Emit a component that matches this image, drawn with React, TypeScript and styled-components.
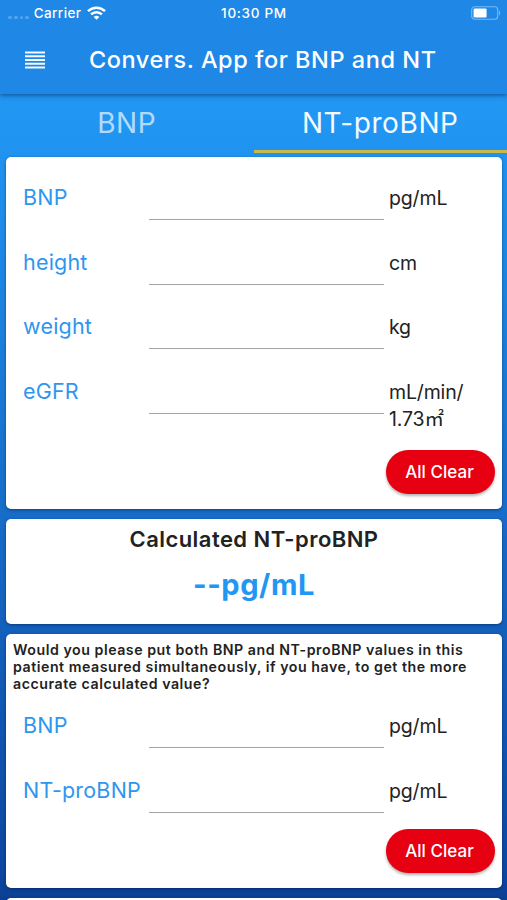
import React from "react";
import styled, { createGlobalStyle } from "styled-components";

const GlobalStyle = createGlobalStyle`
  *, *::before, *::after { box-sizing: border-box; }
  body {
    margin: 0;
    overflow: hidden;
    font-family: Inter, "Noto Sans CJK JP", sans-serif;
    color: #222;
  }
`;

const Screen = styled.div`
  width: 507px;
  height: 900px;
  overflow: hidden;
  display: flex;
  flex-direction: column;
  background: linear-gradient(180deg, #2196f3 0, #2196f3 120px, #0d47a1 870px, #0b3f94 900px);
`;

const Header = styled.header`
  flex: none;
  height: 94px;
  background: #1f87e5;
  color: #fff;
  box-shadow: 0 1px 5px rgba(0, 25, 60, 0.6);
  z-index: 1;
`;

const StatusBar = styled.div`
  height: 26px;
  padding: 0 6px 0 8px;
  display: grid;
  grid-template-columns: 1fr auto 1fr;
  align-items: center;
  font-size: 13.5px;
  font-weight: 500;
  letter-spacing: 0.4px;
  line-height: 26px;
`;

const Carrier = styled.div`
  display: flex;
  align-items: center;
`;

const Clock = styled.span`
  letter-spacing: 0.7px;
  margin-right: 1px;
`;

const Dots = styled.div`
  display: flex;
  gap: 2px;
  padding-top: 9px;
  margin-right: 4.5px;
`;

const Dot = styled.i`
  width: 3.8px;
  height: 3.8px;
  border-radius: 50%;
  background: #55a5ee;
`;

const WifiIcon = styled.svg`
  margin-left: 6px;
`;

const BatteryIcon = styled.svg`
  justify-self: end;
`;

const AppBar = styled.div`
  height: 68px;
  display: flex;
  align-items: center;
  padding-left: 25px;
`;

const MenuIcon = styled.svg`
  flex: none;
  margin-right: 44px;
`;

const Title = styled.h1`
  margin: 0;
  font-size: 23.5px;
  font-weight: 500;
  line-height: 30px;
  letter-spacing: 0.55px;
  white-space: nowrap;
`;

const Tabs = styled.nav`
  flex: none;
  height: 59px;
  display: grid;
  grid-template-columns: 1fr 1fr;
`;

const Tab = styled.div<{ $active?: boolean }>`
  text-align: center;
  padding-top: 11px;
  font-size: 28px;
  line-height: 36px;
  letter-spacing: 0.6px;
  color: ${(p) => (p.$active ? "#f5faff" : "rgba(255,255,255,0.68)")};
  border-bottom: 3px solid ${(p) => (p.$active ? "#c9b94a" : "transparent")};
`;

const Cards = styled.main`
  flex: none;
  padding: 4px 5px 0 6px;
  display: flex;
  flex-direction: column;
  gap: 9.5px;
`;

const Card = styled.section<{ $height: number }>`
  height: ${(p) => p.$height}px;
  border-radius: 5px;
  background: #fff;
  box-shadow: 0 1px 3px rgba(0, 20, 60, 0.5);
  display: flex;
  flex-direction: column;
`;

const Fields = styled.div<{ $top: number }>`
  padding: ${(p) => p.$top}px 0 0 17px;
`;

const Row = styled.label`
  height: 64.7px;
  display: grid;
  grid-template-columns: 126px 235px 1fr;

  &:last-child {
    height: auto;
  }
`;

const Label = styled.span`
  margin-top: -1px;
  font-size: 21.5px;
  line-height: 28px;
  letter-spacing: 0.2px;
  color: #2f96ee;
  white-space: nowrap;
`;

const Input = styled.input`
  height: 36px;
  padding: 0;
  border: 0;
  border-bottom: 1px solid #a5a5a5;
  background: transparent;
  font: inherit;
  outline: none;
`;

const Unit = styled.span`
  padding: 1px 0 0 5px;
  font-size: 19.5px;
  line-height: 27px;
  letter-spacing: -0.15px;
  white-space: pre-line;
`;

const ClearButton = styled.button`
  align-self: flex-end;
  margin: auto 7px 15px 0;
  padding: 0 2px 0 0;
  flex: none;
  width: 109px;
  height: 44px;
  border: 0;
  border-radius: 22px;
  background: #e60012;
  color: #fff;
  font: 500 17px Inter, sans-serif;
  letter-spacing: 0.05px;
  box-shadow: 0 2px 3px rgba(0, 0, 0, 0.3);
`;

const ResultTitle = styled.h2`
  margin: 6px 0 0;
  text-align: center;
  font-size: 22px;
  font-weight: 600;
  line-height: 28px;
  letter-spacing: 0.45px;
`;

const ResultValue = styled.p`
  margin: 14px 0 0;
  text-align: center;
  font-size: 29px;
  font-weight: 700;
  line-height: 36px;
  letter-spacing: 0.6px;
  color: #2196f3;
`;

const Question = styled.p`
  margin: 0;
  padding: 7px 0 0 7px;
  font-size: 14.2px;
  font-weight: 600;
  line-height: 17.2px;
  letter-spacing: 0.53px;
  white-space: pre-line;
`;

type FieldData = { label: string; unit: string };

const PATIENT_FIELDS: FieldData[] = [
  { label: "BNP", unit: "pg/mL" },
  { label: "height", unit: "cm" },
  { label: "weight", unit: "kg" },
  { label: "eGFR", unit: "mL/min/\n1.73㎡" },
];

const MEASURED_FIELDS: FieldData[] = [
  { label: "BNP", unit: "pg/mL" },
  { label: "NT-proBNP", unit: "pg/mL" },
];

function FieldRows({ fields, top }: { fields: FieldData[]; top: number }) {
  return (
    <Fields $top={top}>
      {fields.map((f) => (
        <Row key={f.label}>
          <Label>{f.label}</Label>
          <Input />
          <Unit>{f.unit}</Unit>
        </Row>
      ))}
    </Fields>
  );
}

export default function App() {
  return (
    <>
      <GlobalStyle />
      <Screen>
        <Header>
          <StatusBar>
            <Carrier>
              <Dots><Dot /><Dot /><Dot /><Dot /></Dots>
              Carrier
              <WifiIcon width="19" height="14" viewBox="0 0 19 14" fill="none" stroke="#fff" strokeWidth="2.5">
                <path d="M1 5.2C5.8.6 13.2.6 18 5.2M4.1 8.4c3-2.9 7.8-2.9 10.8 0" />
                <path d="M9.5 13.8 6.6 10.9c1.7-1.5 4.1-1.5 5.8 0Z" fill="#fff" stroke="none" />
              </WifiIcon>
            </Carrier>
            <Clock>10:30 PM</Clock>
            <BatteryIcon width="30" height="14" viewBox="0 0 30 14">
              <rect x="0.7" y="0.7" width="26" height="12.6" rx="3" fill="none" stroke="#7ab9f3" strokeWidth="1.1" />
              <rect x="2.6" y="2.5" width="13" height="9" rx="1.2" fill="#fff" />
              <path d="M28 4.6c1.6.6 1.6 4.2 0 4.8Z" fill="#7ab9f3" />
            </BatteryIcon>
          </StatusBar>
          <AppBar>
            <MenuIcon width="20" height="18" viewBox="0 0 20 18" stroke="#f4faff" strokeWidth="2.2">
              <path d="M0 1.5h20M0 5.25h20M0 9h20M0 12.75h20M0 16.5h20" />
            </MenuIcon>
            <Title>Convers. App for BNP and NT</Title>
          </AppBar>
        </Header>
        <Tabs>
          <Tab>BNP</Tab>
          <Tab $active>NT-proBNP</Tab>
        </Tabs>
        <Cards>
          <Card $height={352}>
            <FieldRows fields={PATIENT_FIELDS} top={27} />
            <ClearButton>All Clear</ClearButton>
          </Card>
          <Card $height={105.5}>
            <ResultTitle>Calculated NT-proBNP</ResultTitle>
            <ResultValue>--pg/mL</ResultValue>
          </Card>
          <Card $height={254.5}>
            <Question>
              {"Would you please put both BNP and NT-proBNP values in this\npatient measured simultaneously, if you have, to get the more\naccurate calculated value?"}
            </Question>
            <FieldRows fields={MEASURED_FIELDS} top={20} />
            <ClearButton>All Clear</ClearButton>
          </Card>
          <Card $height={60} />
        </Cards>
      </Screen>
    </>
  );
}
